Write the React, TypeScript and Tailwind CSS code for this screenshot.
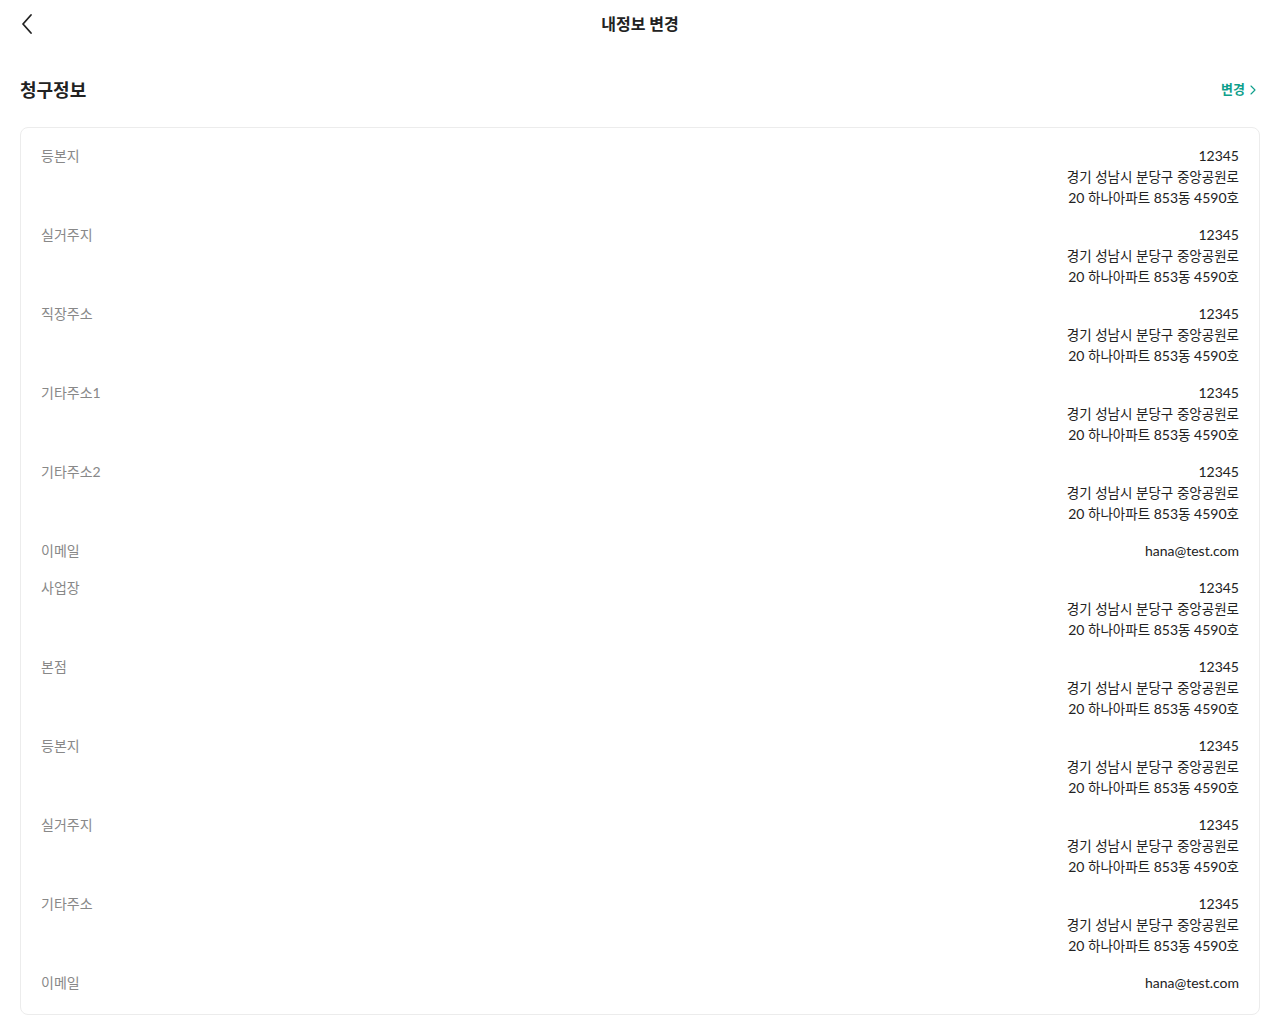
import React from "react";

const address = ["12345", "경기 성남시 분당구 중앙공원로", "20 하나아파트 853동 4590호"];

const rows: { label: string; lines: string[] }[] = [
  { label: "등본지", lines: address },
  { label: "실거주지", lines: address },
  { label: "직장주소", lines: address },
  { label: "기타주소1", lines: address },
  { label: "기타주소2", lines: address },
  { label: "이메일", lines: ["hana@test.com"] },
  { label: "사업장", lines: address },
  { label: "본점", lines: address },
  { label: "등본지", lines: address },
  { label: "실거주지", lines: address },
  { label: "기타주소", lines: address },
  { label: "이메일", lines: ["hana@test.com"] },
];

// hangul runs a touch smaller so the mixed lines keep the reference width
function Mixed({ text }: { text: string }) {
  const parts = text.split(/([가-힣]+)/);
  return (
    <>
      {parts.map((p, i) =>
        /[가-힣]/.test(p) ? (
          <span key={i} className="text-[13.5px]">
            {p}
          </span>
        ) : (
          <React.Fragment key={i}>{p}</React.Fragment>
        )
      )}
    </>
  );
}

export default function App() {
  return (
    <div
      className="min-h-screen bg-white text-[#222]"
      style={{ fontFamily: "Lato, 'Noto Sans CJK KR', sans-serif" }}
    >
      <header className="relative flex h-12 items-center justify-center">
        <button className="absolute left-[16px] top-[9px] p-1" aria-label="뒤로">
          <svg width="14" height="22" viewBox="0 0 14 22" fill="none">
            <path d="M11 2 L3 11 L11 20" stroke="#222" strokeWidth="1.8" strokeLinecap="round" strokeLinejoin="round" />
          </svg>
        </button>
        <h1 className="text-[16px] font-bold leading-none">내정보 변경</h1>
      </header>

      <section className="px-5 pt-[30px]">
        <div className="mb-[25px] flex items-center justify-between">
          <h2 className="text-[18px] font-bold leading-6">청구정보</h2>
          <button className="mr-1 flex items-center gap-[5px] text-[13px] font-bold text-[#0f9f8c]">
            변경
            <svg width="6" height="10" viewBox="0 0 6 10" fill="none">
              <path d="M1 1 L5 5 L1 9" stroke="#0f9f8c" strokeWidth="1.1" strokeLinecap="round" strokeLinejoin="round" />
            </svg>
          </button>
        </div>

        <div className="flex flex-col gap-4 rounded-lg border border-[#ececec] px-5 pt-[17px] pb-[21px]">
          {rows.map((row, i) => (
            <div key={i} className="flex justify-between text-[14px] leading-[21px]">
              <span className="text-[#888]">{row.label}</span>
              <div className="text-right">
                {row.lines.map((line, j) => (
                  <div key={j} className="h-[21px] whitespace-nowrap">
                    <Mixed text={line} />
                  </div>
                ))}
              </div>
            </div>
          ))}
        </div>
      </section>
    </div>
  );
}
